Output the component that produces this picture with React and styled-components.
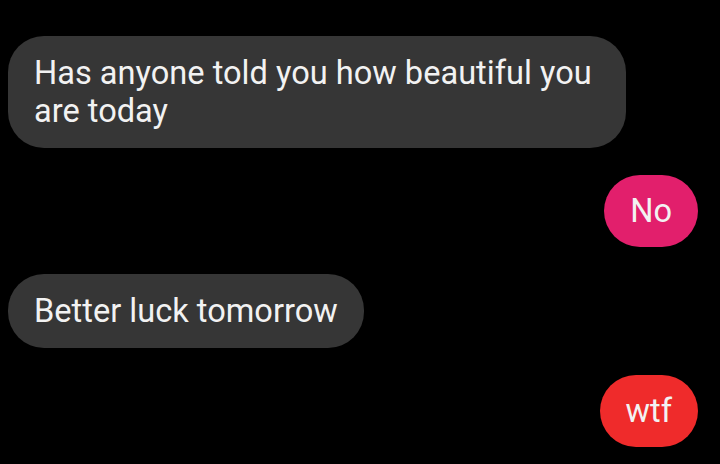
import React from "react";
import styled, { createGlobalStyle } from "styled-components";

const GlobalStyle = createGlobalStyle`
  html, body {
    margin: 0;
    padding: 0;
    background: #000;
  }
`;

const Thread = styled.div`
  width: 720px;
  height: 464px;
  box-sizing: border-box;
  padding: 36px 22px 0 8px;
  display: flex;
  flex-direction: column;
  gap: 27px;
  background: #000;
  overflow: hidden;
  font-family: Roboto, "Liberation Sans", sans-serif;
`;

const Bubble = styled.div`
  align-self: ${(p) => (p.$mine ? "flex-end" : "flex-start")};
  max-width: 618px;
  box-sizing: border-box;
  padding: ${(p) => (p.$mine ? "17px 26px" : "18px 26px")};
  border-radius: 36px;
  background: ${(p) => p.$color || "#363636"};
  color: #f2f2f2;
  font-size: 32.6px;
  line-height: 38px;
`;

const messages = [
  { text: "Has anyone told you how beautiful you are today" },
  { text: "No", mine: true, color: "#e21f6c" },
  { text: "Better luck tomorrow" },
  { text: "wtf", mine: true, color: "#ef2b2b" },
];

export default function App() {
  return (
    <>
      <GlobalStyle />
      <Thread>
        {messages.map((m, i) => (
          <Bubble key={i} $mine={m.mine} $color={m.color}>
            {m.text}
          </Bubble>
        ))}
      </Thread>
    </>
  );
}
